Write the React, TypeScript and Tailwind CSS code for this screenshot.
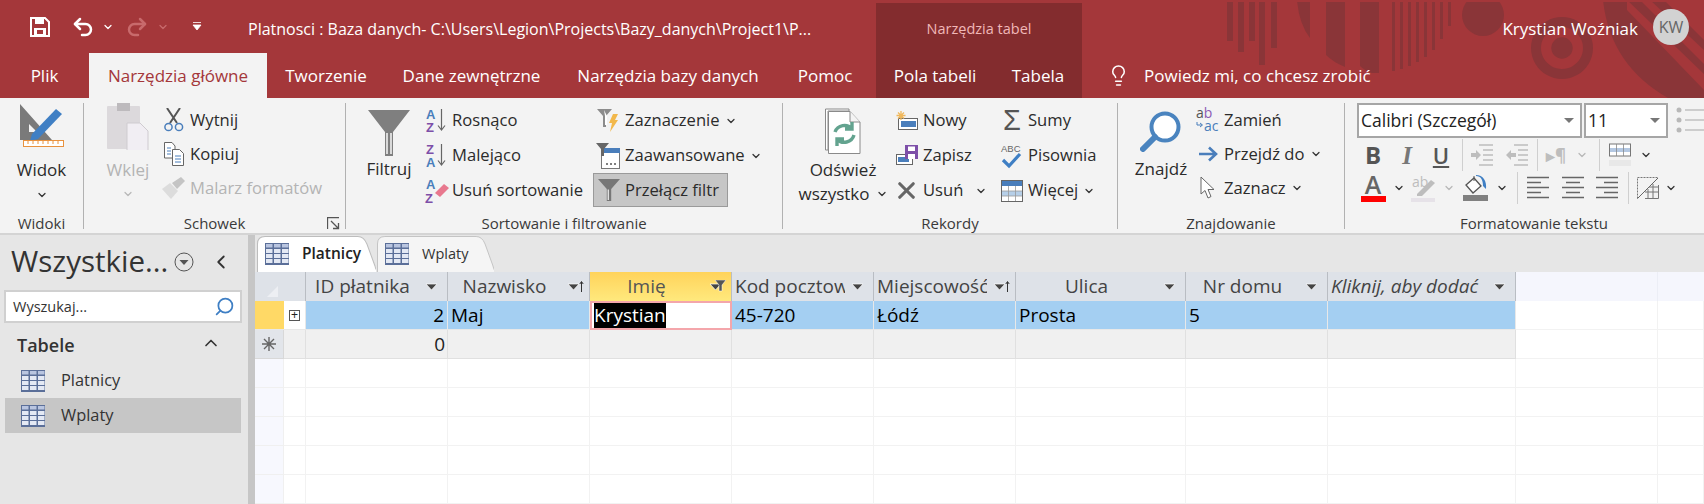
import { ChevronDown, ChevronLeft, ChevronUp, Lightbulb, Redo2, Search, Undo2, X } from 'lucide-react';
import type { ReactNode } from 'react';

const Caret = ({ dim = false, className = '' }: { dim?: boolean; className?: string }) => (
  <ChevronDown size={12} strokeWidth={2.5} className={`${dim ? 'text-[#b8b8b8]' : 'text-[#333]'} shrink-0 ${className}`} />
);

const TableIcon = ({ className = '' }: { className?: string }) => (
  <svg width="24" height="22" viewBox="0 0 24 22" className={className}>
    <rect width="24" height="22" fill="#5b6f99" />
    {[6, 11, 16].map((y) => [1, 9, 17].map((x) => <rect key={`${x}${y}`} x={x} y={y} width="6.5" height="4" fill="#e4e9f4" />))}
    {[1, 9, 17].map((x) => <rect key={x} x={x} y="1" width="6.5" height="3.5" fill="#b9c5e0" />)}
  </svg>
);

const Funnel = ({ size = 20, color = '#7f7f7f' }: { size?: number; color?: string }) => (
  <svg width={size} height={size} viewBox="0 0 20 20">
    <path d="M0 0H20L12 9V20H8V9Z" fill={color} />
    <path d="M9.3 9.5V19" stroke="#fff" strokeWidth="1" />
  </svg>
);

const SortAZ = ({ top, bottom, topC, bottomC }: { top: string; bottom: string; topC: string; bottomC: string }) => (
  <svg width="22" height="25" viewBox="0 0 22 25" className="overflow-visible">
    <text x="0" y="11" fontSize="13" fontWeight="700" fill={topC} fontFamily="Liberation Sans">{top}</text>
    <text x="0" y="24" fontSize="13" fontWeight="700" fill={bottomC} fontFamily="Liberation Sans">{bottom}</text>
    <path d="M15.5 1V21M12 17.5L15.5 22L19 17.5" stroke="#666" strokeWidth="1.2" fill="none" />
  </svg>
);

const icons: Record<string, ReactNode> = {
  cut: (
    <svg width="20" height="24" viewBox="0 0 20 24">
      <path d="M3 0L13 15M16 0L6 15" stroke="#555" strokeWidth="2" />
      <circle cx="4.5" cy="19" r="3.6" fill="none" stroke="#4a7ebb" strokeWidth="1.5" />
      <circle cx="15" cy="19" r="3.6" fill="none" stroke="#4a7ebb" strokeWidth="1.5" />
    </svg>
  ),
  copy: (
    <svg width="20" height="24" viewBox="0 0 20 24">
      <path d="M.5.5H8L11 4V16H.5Z" fill="#fff" stroke="#666" />
      <path d="M8.5 7.5H15.5L19.5 11.5V23.5H8.5Z" fill="#fff" stroke="#666" />
      <path d="M3 6H7M3 9H7M3 12H7" stroke="#4a7ebb" />
      <path d="M11 14H17M11 17H17M11 20H17" stroke="#4a7ebb" />
    </svg>
  ),
  brush: (
    <svg width="24" height="22" viewBox="0 0 24 22">
      <path d="M0 12L8 6L16 14L9 22Z" fill="#dcdcdc" />
      <path d="M10 6L19 0L23 4L15 12Z" fill="#c4c4c4" />
    </svg>
  ),
  asc: <SortAZ top="A" bottom="Z" topC="#4a7ebb" bottomC="#7d4fa8" />,
  desc: <SortAZ top="Z" bottom="A" topC="#7d4fa8" bottomC="#4a7ebb" />,
  clear: (
    <svg width="24" height="25" viewBox="0 0 24 25" className="overflow-visible">
      <text x="1" y="11" fontSize="13" fontWeight="700" fill="#4a7ebb" fontFamily="Liberation Sans">A</text>
      <text x="0" y="24.5" fontSize="13" fontWeight="700" fill="#7d4fa8" fontFamily="Liberation Sans">Z</text>
      <path d="M10 15L19 6L24 10L15 19Z" fill="#e8788e" />
    </svg>
  ),
  selection: (
    <svg width="22" height="24" viewBox="0 0 22 24">
      <path d="M0 0H15L9 7V18H6V7Z" fill="#8c8c8c" />
      <path d="M7 1L10 7V16H8V7Z" fill="#fff" />
      <path d="M16 5H21L18 11H21L13 23L15 14H12Z" fill="#f2b84b" />
    </svg>
  ),
  advanced: (
    <svg width="24" height="26" viewBox="0 0 24 26">
      <rect x="5.5" y="5.5" width="18" height="20" fill="#fff" stroke="#777" />
      <rect x="6" y="5" width="18" height="5" fill="#4a7ebb" />
      <path d="M0 0H13L8 6V13H5V6Z" fill="#666" />
      <path d="M10 21H12M14 21H16M18 21H20" stroke="#555" strokeWidth="1.4" />
    </svg>
  ),
  refresh: (
    <svg width="36" height="46" viewBox="0 0 36 46">
      <path d="M.5 1H24V3H3V42H.5Z" fill="#fff" stroke="#8a8a8a" />
      <path d="M3.5 3.5H25L35 14V45.5H3.5Z" fill="#fff" stroke="#8a8a8a" />
      <path d="M25 3.5V14H35" fill="#f4f4f4" stroke="#8a8a8a" />
      <path d="M10 24A10 10 0 0 1 27 21M27 14V21H20" fill="none" stroke="#63a38f" strokeWidth="3.4" />
      <path d="M29 27A10 10 0 0 1 12 31M12 38V31H19" fill="none" stroke="#63a38f" strokeWidth="3.4" />
    </svg>
  ),
  newRec: (
    <svg width="22" height="20" viewBox="0 0 22 20">
      <rect x="2.5" y="7.5" width="19" height="11" fill="#fff" stroke="#666" />
      <rect x="5" y="10" width="15" height="6" fill="#4a7ebb" />
      <path d="M5 0V9M.5 4.5H9.500M2 1.500L8 7.500M8 1.500L2 7.500" stroke="#f0b85c" strokeWidth="1.3" />
    </svg>
  ),
  saveRec: (
    <svg width="22" height="22" viewBox="0 0 22 22">
      <rect x=".5" y="9.500" width="16" height="10" fill="#fff" stroke="#666" />
      <rect x="2" y="12" width="11" height="5" fill="#4a7ebb" />
      <rect x="9" y="0" width="13" height="14" fill="#7d4fa8" />
      <rect x="12" y="1.500" width="7" height="4.500" fill="#fff" />
      <rect x="12" y="9" width="7" height="5" fill="#fff" />
    </svg>
  ),
  del: <X size={27} strokeWidth={2.8} className="text-[#666]" />,
  sum: <span className="text-[29px] leading-none text-[#555] font-['Liberation_Sans',sans-serif]">Σ</span>,
  spell: (
    <svg width="22" height="26" viewBox="0 0 22 26" className="overflow-visible">
      <text x="0" y="9" fontSize="9.500" fill="#666" fontFamily="Liberation Sans">ABC</text>
      <path d="M2 17L8 23L19 11" fill="none" stroke="#3f7fc4" strokeWidth="3.200" />
    </svg>
  ),
  more: (
    <svg width="22" height="22" viewBox="0 0 22 22">
      <rect x=".5" y=".5" width="21" height="21" fill="#fff" stroke="#666" />
      <rect x="1" y="1" width="20" height="5" fill="#4a7ebb" />
      <rect x="1" y="11" width="20" height="5" fill="#b6cfe8" />
      <path d="M1 11H21M1 16H21M7.500 6V21M14.500 6V21" stroke="#999" strokeWidth=".8" />
    </svg>
  ),
  replace: (
    <svg width="24" height="26" viewBox="0 0 24 26" className="overflow-visible">
      <text x="0" y="11" fontSize="14" fill="#555" fontFamily="Open Sans">a<tspan fill="#8a5bb5">b</tspan></text>
      <text x="8" y="24" fontSize="14" fill="#4a7ebb" fontFamily="Open Sans">ac</text>
      <path d="M1 15V18H6M4 16L6.500 18L4 20" fill="none" stroke="#4a7ebb" strokeWidth="1" />
    </svg>
  ),
  goto: (
    <svg width="20" height="16" viewBox="0 0 20 16">
      <path d="M1 8H17M11 1.500L18 8L11 14.500" fill="none" stroke="#4a7ebb" strokeWidth="2.600" />
    </svg>
  ),
  pointer: (
    <svg width="16" height="24" viewBox="0 0 16 24">
      <path d="M1 1V18L5 14.500L8 22L11 20.500L8 13.500H14Z" fill="#fff" stroke="#666" />
    </svg>
  ),
};

function Tool({ icon, label, iconW = 'w-[26px]', dim = false, caret }: { icon: string; label: string; iconW?: string; dim?: boolean; caret?: string }) {
  return (
    <div className={`flex items-center h-full whitespace-nowrap ${dim ? 'text-[#b4b4b4]' : 'text-[#2b2b2b]'}`}>
      <span className={`${iconW} flex justify-center shrink-0`}>{icons[icon]}</span>
      <span className="ml-[3px]">{label}</span>
      {caret && <Caret className={caret} />}
    </div>
  );
}

function Group({ width, label, children, launcher }: { width: string; label: string; children: ReactNode; launcher?: boolean }) {
  return (
    <div className={`${width} shrink-0 flex flex-col relative`}>
      <div className="h-[115px] flex pt-[5px] overflow-hidden">{children}</div>
      <div className="h-[20px] text-center text-[15px] leading-[20px] text-[#3a3a3a] whitespace-nowrap">{label}</div>
      {launcher && (
        <svg width="13" height="13" viewBox="0 0 13 13" className="absolute right-[5px] top-[119px]">
          <path d="M.5 12V.5H12M4 4L11 11M6 11.500H11.500V6" fill="none" stroke="#555" strokeWidth="1.300" />
        </svg>
      )}
    </div>
  );
}

const Sep = () => <div className="w-px h-[126px] mt-[5px] bg-[#b1b1b1] shrink-0" />;

const BigLabel = ({ children, dim = false }: { children: ReactNode; dim?: boolean }) => (
  <div className={`text-center text-[17px] leading-[24px] ${dim ? 'text-[#b4b4b4]' : 'text-[#2b2b2b]'}`}>{children}</div>
);

function Slot({ w, children }: { w: string; children?: ReactNode }) {
  return <div className={`${w} h-full flex items-center justify-center shrink-0`}>{children}</div>;
}

const VSep = () => <div className="w-px h-[32px] bg-[#cfcfcf] shrink-0" />;

const Lines = ({ align, color = '#666' }: { align: 'l' | 'c' | 'r'; color?: string }) => {
  const short = align === 'l' ? 'M0 6.500H14M0 16.500H14' : align === 'c' ? 'M4 6.500H18M4 16.500H18' : 'M8 6.500H22M8 16.500H22';
  return (
    <svg width="22" height="24" viewBox="0 0 22 24">
      <path d="M0 1.500H22M0 11.500H22M0 21.500H22" stroke={color} strokeWidth="1.400" />
      <path d={short} stroke={color} strokeWidth="1.400" />
    </svg>
  );
};

function FontGroup() {
  return (
    <div className="pl-[12px] flex flex-col w-full text-[17.5px]">
      <div className="flex gap-[2px] h-[35px]">
        <div className="w-[225px] h-[35px] border-2 border-[#a6a6a6] bg-white flex items-center pl-[2px] pr-[6px] justify-between shrink-0">
          <span className="text-[#222]">Calibri (Szczegół)</span>
          <span className="w-0 h-0 border-x-[5px] border-x-transparent border-t-[5px] border-t-[#777]" />
        </div>
        <div className="w-[84px] h-[35px] border-2 border-[#a6a6a6] bg-white flex items-center pl-[2px] pr-[6px] justify-between shrink-0">
          <span className="text-[#222]">11</span>
          <span className="w-0 h-0 border-x-[5px] border-x-transparent border-t-[5px] border-t-[#777]" />
        </div>
        <svg width="30" height="28" viewBox="0 0 30 28" className="mt-[3px] ml-[6px] shrink-0">
          {[4, 14, 24].map((y) => (
            <g key={y}>
              <circle cx="3" cy={y} r="2.500" fill="#b8b8b8" />
              <path d={`M9 ${y}H30`} stroke="#b8b8b8" strokeWidth="1.300" />
            </g>
          ))}
        </svg>
      </div>
      <div className="flex items-center h-[32px] mt-[1px] -ml-[1px]">
        <Slot w="w-[34px]"><span className="text-[24px] leading-none font-bold text-[#555]">B</span></Slot>
        <Slot w="w-[34px]"><span className="text-[25px] leading-none italic font-semibold text-[#777] font-['Liberation_Serif',serif]">I</span></Slot>
        <Slot w="w-[34px]"><span className="text-[22px] leading-none font-semibold text-[#555] underline underline-offset-2">U</span></Slot>
        <Slot w="w-[4px]" />
        <VSep />
        <Slot w="w-[37px]">
          <svg width="22" height="22" viewBox="0 0 22 22"><path d="M8 1H22M12 6H22M12 11H22M12 16H22M8 21H22" stroke="#bdbdbd" strokeWidth="1.300" /><path d="M0 9H5V6L10 11L5 16V13H0Z" fill="#bdbdbd" /></svg>
        </Slot>
        <Slot w="w-[34px]">
          <svg width="22" height="22" viewBox="0 0 22 22"><path d="M8 1H22M12 6H22M12 11H22M12 16H22M8 21H22" stroke="#bdbdbd" strokeWidth="1.300" /><path d="M10 9H5V6L0 11L5 16V13H10Z" fill="#bdbdbd" /></svg>
        </Slot>
        <Slot w="w-[3px]" />
        <VSep />
        <Slot w="w-[36px]"><span className="text-[17px] font-bold text-[#bdbdbd] leading-none">▸¶</span></Slot>
        <Slot w="w-[16px]"><Caret dim /></Slot>
        <Slot w="w-[9px]" />
        <VSep />
        <Slot w="w-[40px]">
          <svg width="22" height="24" viewBox="0 0 22 24"><rect x=".5" y="1" width="21" height="12" fill="#fff" stroke="#777" /><rect x="1" y="5" width="20" height="4" fill="#b4c8e2" /><path d="M7.500 1V13M14.500 1V13" stroke="#888" strokeWidth=".8" /><rect y="17" width="24" height="6" fill="#e8e8e8" /></svg>
        </Slot>
        <Slot w="w-[12px]"><Caret /></Slot>
      </div>
      <div className="flex items-center h-[32px] mt-[1px] -ml-[1px]">
        <Slot w="w-[34px]">
          <div className="flex flex-col items-center">
            <span className="text-[25px] leading-[21px] font-semibold text-[#666]">A</span>
            <span className="w-[25px] h-[6px] bg-[#ff0000] mt-[1px]" />
          </div>
        </Slot>
        <Slot w="w-[18px]"><Caret /></Slot>
        <Slot w="w-[30px]">
          <svg width="25" height="27" viewBox="0 0 25 27" className="overflow-visible"><text x="1" y="12" fontSize="14" fill="#bdbdbd" fontFamily="Open Sans">ab</text><path d="M6 19L20 5L24 8L11 21H6Z" fill="#bdbdbd" /><rect y="23" width="24" height="4" fill="#e6e2e8" /></svg>
        </Slot>
        <Slot w="w-[22px]"><Caret dim /></Slot>
        <Slot w="w-[31px]">
          <svg width="25" height="26" viewBox="0 0 25 26"><path d="M3 10L11 3L18 11L10 18Z" fill="#fff" stroke="#555" strokeWidth="1.300" /><path d="M11 6V1" stroke="#555" /><path d="M13 1C18 1 20 5 20 11L23 14C24 6 20 0 13 0Z" fill="#3f7fc4" /><rect y="20" width="25" height="6" fill="#808080" /></svg>
        </Slot>
        <Slot w="w-[21px]"><Caret /></Slot>
        <Slot w="w-[5px]" />
        <VSep />
        <Slot w="w-[39px]"><Lines align="l" /></Slot>
        <Slot w="w-[32px]"><Lines align="c" /></Slot>
        <Slot w="w-[36px]"><Lines align="r" /></Slot>
        <Slot w="w-[3px]" />
        <VSep />
        <Slot w="w-[38px]">
          <svg width="22" height="22" viewBox="0 0 22 22"><path d="M.5 21.500V.5H21" fill="none" stroke="#777" strokeDasharray="2 1" /><path d="M.5 21.500L21 1" stroke="#666" /><path d="M8 21.500H21.500V8M11 12V21M16 7V21M8 15H21M12 10H21" fill="none" stroke="#777" /></svg>
        </Slot>
        <Slot w="w-[8px]"><Caret /></Slot>
      </div>
    </div>
  );
}

function Ribbon() {
  return (
    <div className="h-[135px] bg-[#f3f3f3] flex text-[16.6px] border-b-[2px] border-[#d4d4d4] box-content overflow-hidden">
      <Group width="w-[83px]" label="Widoki">
        <div className="w-full flex flex-col items-center">
          <svg width="44" height="44" viewBox="0 0 44 44">
            <path d="M0 1L32 37H0ZM9 21V29H17Z" fill="#7a7a7a" fillRule="evenodd" />
            <path d="M12 31L36 6L42 11L18 36L10 38Z" fill="#3f7fc4" />
            <rect x="3.500" y="37.500" width="40" height="6" fill="#fff" stroke="#e8923f" />
            <path d="M8 38V41M13 38V41M18 38V41M23 38V41M28 38V41M33 38V41M38 38V41" stroke="#e8923f" />
          </svg>
          <div className="mt-[11px]"><BigLabel>Widok</BigLabel></div>
          <Caret className="mt-[7px]" />
        </div>
      </Group>
      <Sep />
      <Group width="w-[261px]" label="Schowek" launcher>
        <div className="w-[46px] ml-[21px] flex flex-col items-center shrink-0">
          <svg width="42" height="47" viewBox="0 0 42 47">
            <rect y="3" width="33" height="43" rx="1" fill="#dcd9dc" />
            <rect x="10" y="0" width="13" height="8" fill="#bdbabd" />
            <path d="M20 20H33L41 28V52H20Z" fill="#f1eef3" stroke="#cfcbd0" />
          </svg>
          <div className="mt-[8px]"><BigLabel dim>Wklej</BigLabel></div>
          <Caret dim className="mt-[6px]" />
        </div>
        <div className="ml-[10px] flex flex-col">
          <div className="h-[34px]"><Tool icon="cut" label="Wytnij" /></div>
          <div className="h-[34px]"><Tool icon="copy" label="Kopiuj" /></div>
          <div className="h-[34px]"><Tool icon="brush" label="Malarz formatów" dim /></div>
        </div>
      </Group>
      <Sep />
      <Group width="w-[436px]" label="Sortowanie i filtrowanie">
        <div className="w-[50px] ml-[18px] flex flex-col items-center shrink-0 pt-[7px]">
          <svg width="42" height="46" viewBox="0 0 42 46">
            <path d="M0 0H42L25 22V46H17V22Z" fill="#7f7f7f" />
            <path d="M19 23V44M23 23V44" stroke="#fff" strokeWidth="1.400" />
          </svg>
          <div className="mt-[1px]"><BigLabel>Filtruj</BigLabel></div>
        </div>
        <div className="w-[169px] ml-[10px] flex flex-col shrink-0">
          <div className="h-[35px]"><Tool icon="asc" label="Rosnąco" iconW="w-[25px]" /></div>
          <div className="h-[35px]"><Tool icon="desc" label="Malejąco" iconW="w-[25px]" /></div>
          <div className="h-[35px]"><Tool icon="clear" label="Usuń sortowanie" iconW="w-[25px]" /></div>
        </div>
        <div className="flex flex-col">
          <div className="h-[35px]"><Tool icon="selection" label="Zaznaczenie" iconW="w-[29px]" caret="ml-[5px]" /></div>
          <div className="h-[35px]"><Tool icon="advanced" label="Zaawansowane" iconW="w-[29px]" caret="ml-[5px]" /></div>
          <div className="h-[34px] w-[135px] bg-[#c6c6c6] border border-[#9a9a9a] flex items-center">
            <span className="w-[30px] flex justify-center shrink-0"><Funnel size={22} color="#777" /></span>
            <span className="ml-[1px] text-[#2b2b2b] whitespace-nowrap">Przełącz filtr</span>
          </div>
        </div>
      </Group>
      <Sep />
      <Group width="w-[334px]" label="Rekordy">
        <div className="w-[100px] ml-[10px] flex flex-col items-center shrink-0 pt-[5px]">
          <span className="h-[46px]">{icons.refresh}</span>
          <div className="mt-[4px] whitespace-nowrap"><BigLabel>Odśwież</BigLabel></div>
          <div className="flex items-center whitespace-nowrap"><BigLabel>wszystko</BigLabel><Caret className="ml-[6px]" /></div>
        </div>
        <div className="w-[106px] flex flex-col shrink-0">
          <div className="h-[35px]"><Tool icon="newRec" label="Nowy" iconW="w-[27px]" /></div>
          <div className="h-[35px]"><Tool icon="saveRec" label="Zapisz" iconW="w-[27px]" /></div>
          <div className="h-[35px]"><Tool icon="del" label="Usuń" iconW="w-[27px]" caret="ml-[12px]" /></div>
        </div>
        <div className="flex flex-col">
          <div className="h-[35px]"><Tool icon="sum" label="Sumy" /></div>
          <div className="h-[35px]"><Tool icon="spell" label="Pisownia" /></div>
          <div className="h-[35px]"><Tool icon="more" label="Więcej" caret="ml-[5px]" /></div>
        </div>
      </Group>
      <Sep />
      <Group width="w-[226px]" label="Znajdowanie">
        <div className="w-[54px] ml-[16px] flex flex-col items-center shrink-0 pt-[7px]">
          <svg width="42" height="42" viewBox="0 0 42 42">
            <circle cx="25" cy="17" r="13.500" fill="#fff" stroke="#4a84bf" strokeWidth="4" />
            <path d="M15 27L3 39" stroke="#4a84bf" strokeWidth="6" strokeLinecap="round" />
          </svg>
          <div className="mt-[5px]"><BigLabel>Znajdź</BigLabel></div>
        </div>
        <div className="ml-[7px] flex flex-col">
          <div className="h-[34px]"><Tool icon="replace" label="Zamień" /></div>
          <div className="h-[34px]"><Tool icon="goto" label="Przejdź do" caret="ml-[6px]" /></div>
          <div className="h-[34px]"><Tool icon="pointer" label="Zaznacz" caret="ml-[5px]" /></div>
        </div>
      </Group>
      <Sep />
      <Group width="w-[378px]" label="Formatowanie tekstu">
        <FontGroup />
      </Group>
    </div>
  );
}

function TitlePattern() {
  const thin: [number, number][] = [[1392, 71], [1400, 69], [1408, 66], [1416, 62], [1424, 57], [1432, 50], [1440, 39], [1448, 26]];
  const bars: [number, number][] = [[1227, 41], [1238, 52], [1249, 41], [1259, 65], [1271, 48]];
  return (
    <svg width="1704" height="98" viewBox="0 0 1704 98" className="absolute left-0 top-0">
      <defs>
        <clipPath id="band"><rect x="0" y="2" width="1704" height="96" /></clipPath>
      </defs>
      <g clipPath="url(#band)" fill="#8a3538">
        {bars.map(([x, y]) => <rect key={x} x={x} y="0" width="6" height={y} />)}
        <path d="M1297 0Q1299 24 1310 38V0Z" />
        <path d="M1326 0H1345V67Q1333 62 1326 55Z" />
        <path d="M1360 0H1379V73H1372Q1365 71 1360 66Z" />
        {thin.map(([x, y]) => <rect key={x} x={x} y="0" width="3" height={y} />)}
        <circle cx="1483" cy="15" r="21" />
        <path fillRule="evenodd" d="M1562 17a31 31 0 1 0 .01 0ZM1562 27a21 21 0 1 1-.01 0Z" />
        <circle cx="1562" cy="48" r="10.700" />
        <path d="M1603 0Q1610 65 1668 98H1704V90L1627 10V0Z" />
        <path d="M1627 0H1640L1704 64V74ZM1650 0H1664L1704 40V50Z" />
      </g>
    </svg>
  );
}

function Chrome() {
  const tab = 'flex items-center justify-center shrink-0 whitespace-nowrap';
  return (
    <div className="h-[98px] bg-[#a4373a] text-white relative flex text-[17px]">
      <TitlePattern />
      <div className="w-[876px] shrink-0 flex flex-col relative">
        <div className="h-[53px] flex items-center">
          <svg width="20" height="20" viewBox="0 0 20 20" className="ml-[30px]">
            <path d="M1 1H15L19 5V19H1Z" fill="none" stroke="#fff" strokeWidth="2" />
            <rect x="5" y="1" width="9" height="6" fill="#fff" />
            <path d="M4 19V11H16V19Z" fill="#fff" />
            <rect x="7" y="13" width="6" height="4" fill="#a4373a" />
          </svg>
          <Undo2 size={24} strokeWidth={2.5} className="ml-[21px]" />
          <Caret className="ml-[7px] !text-white" />
          <Redo2 size={24} strokeWidth={2.5} className="ml-[11px] text-[#c86a6c]" />
          <Caret className="ml-[8px] !text-[#c86a6c]" />
          <svg width="10" height="9" viewBox="0 0 10 9" className="ml-[23px]"><path d="M1 .5H9M1 3H9L5 8Z" stroke="#fff" fill="#fff" strokeWidth=".8" /></svg>
          <span className="ml-[46px] mt-[4px] whitespace-nowrap text-[16px]">Platnosci : Baza danych- C:\Users\Legion\Projects\Bazy_danych\Project1\P...</span>
        </div>
        <div className="h-[45px] flex">
          <div className={`${tab} w-[89px]`}>Plik</div>
          <div className={`${tab} w-[178px] bg-[#f3f3f3] text-[#a4373a]`}>Narzędzia główne</div>
          <div className={`${tab} w-[118px]`}>Tworzenie</div>
          <div className={`${tab} w-[173px]`}>Dane zewnętrzne</div>
          <div className={`${tab} w-[220px]`}>Narzędzia bazy danych</div>
          <div className={`${tab} w-[94px]`}>Pomoc</div>
        </div>
      </div>
      <div className="w-[206px] shrink-0 flex flex-col relative">
        <div className="h-[53px] pt-[3px]">
          <div className="h-[50px] bg-[#832c2e] flex justify-center pt-[15px] text-[#f0b8b8] text-[14.5px]">Narzędzia tabel</div>
        </div>
        <div className="h-[45px] flex bg-[#832c2e]">
          <div className={`${tab} w-[118px]`}>Pola tabeli</div>
          <div className={`${tab} w-[88px]`}>Tabela</div>
        </div>
      </div>
      <div className="flex-1 min-w-0 flex flex-col relative">
        <div className="h-[53px] flex items-center justify-end pr-[15px]">
          <span className="whitespace-nowrap mt-[4px]">Krystian Woźniak</span>
          <span className="w-[36px] h-[36px] ml-[15px] rounded-full bg-[#d2d2d2] text-[#666] flex items-center justify-center text-[16px]">KW</span>
        </div>
        <div className="h-[45px] flex items-center pl-[25px]">
          <Lightbulb size={23} strokeWidth={1.6} />
          <span className="ml-[14px] whitespace-nowrap">Powiedz mi, co chcesz zrobić</span>
        </div>
      </div>
    </div>
  );
}

function NavPane() {
  return (
    <div className="w-[248px] shrink-0 bg-[#e6e6e6] flex flex-col text-[#333]">
      <div className="h-[53px] flex items-center pl-[11px]">
        <span className="text-[29.5px] whitespace-nowrap text-[#333]">Wszystkie...</span>
        <svg width="20" height="20" viewBox="0 0 20 20" className="ml-[6px] shrink-0"><circle cx="10" cy="10" r="9" fill="none" stroke="#555" /><path d="M5.500 8H14.500L10 13Z" fill="#555" /></svg>
        <ChevronLeft size={22} className="ml-[16px] shrink-0" />
      </div>
      <div className="ml-[4px] mr-[6px] mt-[2px] h-[33px] bg-white border-2 border-[#d0d0d0] flex items-center justify-between pl-[7px] pr-[5px] text-[14.5px]">
        <span>Wyszukaj...</span>
        <Search size={21} className="text-[#3f7fc4] -scale-x-100" />
      </div>
      <div className="h-[40px] flex items-center justify-between pt-[5px] pl-[17px] pr-[27px] text-[18px] font-semibold">
        <span>Tabele</span>
        <ChevronUp size={20} className="-mt-[5px]" />
      </div>
      <div className="h-[35px] ml-[5px] mr-[7px] flex items-center pl-[16px] text-[16.4px]">
        <TableIcon className="shrink-0" />
        <span className="ml-[16px]">Platnicy</span>
      </div>
      <div className="h-[35px] ml-[5px] mr-[7px] bg-[#c6c6c6] flex items-center pl-[16px] text-[16.4px]">
        <TableIcon className="shrink-0" />
        <span className="ml-[16px]">Wplaty</span>
      </div>
    </div>
  );
}

function DocTab({ label, active, w }: { label: string; active?: boolean; w: string }) {
  return (
    <div className={`${w} relative h-[36px] shrink-0`}>
      <svg viewBox="0 0 118 36" preserveAspectRatio="none" className="absolute inset-0 w-full h-full">
        <path d="M.5 36V8Q.5 .5 8 .5H100Q106 .5 109 8L117 30Q118 36 122 36" fill={active ? '#fff' : '#f5f5f5'} stroke={active ? '#bdbdbd' : '#c4c4c4'} />
      </svg>
      <div className="relative h-full flex items-center pl-[8px]">
        <TableIcon />
        <span className={`ml-[13px] ${active ? 'text-[15.5px] font-semibold text-[#222]' : 'text-[14.5px] text-[#333]'}`}>{label}</span>
      </div>
    </div>
  );
}

const cols = 'grid grid-cols-[29px_22px_142px_142px_142px_142px_142px_170px_142px_188px_142px_1fr]';

const Arrow = ({ sort = false, filter = false }: { sort?: boolean; filter?: boolean }) => (
  <span className="w-[28px] h-full flex items-center justify-center shrink-0">
    <svg width="18" height="14" viewBox="0 0 18 14">
      <path d="M2 4H13L7.500 10Z" fill="#444" stroke="#fff" strokeWidth=".7" />
      {sort && !filter && <path d="M15.500 12V2M13.800 4L15.500 1.500L17.200 4" stroke="#333" fill="none" />}
      {filter && <path d="M7 0H18L14 5V11H11V5Z" fill="#555" stroke="#fff" strokeWidth=".5" />}
    </svg>
  </span>
);

const HeadCell = ({ label, italic, left, sort, filter }: { label: string; italic?: boolean; left?: boolean; sort?: boolean; filter?: boolean }) => (
  <div className={`h-[29px] flex items-center border-r border-[#b9bdc3] min-w-0 ${filter ? 'bg-gradient-to-b from-[#ffd35a] to-[#ffe97d] text-[#555]' : 'bg-[#dee2e8] text-[#444]'}`}>
    <span className={`flex-1 min-w-0 overflow-hidden whitespace-nowrap ${left ? 'pl-[3px]' : 'text-center'} ${italic ? 'italic text-[19px]' : ''}`}>{label}</span>
    <Arrow sort={sort} filter={filter} />
  </div>
);

function Datasheet() {
  const blank = Array.from({ length: 5 });
  const cell = 'h-[29px] border-r border-b border-[#f2f2f2]';
  const selected = 'h-[29px] px-[3px] pt-[1px] bg-[#a4cff2] border-r border-b border-[#e8e8e8] flex items-center text-black whitespace-nowrap text-[19px]';
  const fresh = 'h-[29px] bg-[#f0f0f0] border-r border-b border-[#e0e0e0] flex items-center justify-end px-[2px] pt-[1px] text-[#222] text-[19px]';
  return (
    <div className="flex-1 min-w-0 flex flex-col bg-white text-[19px]">
      <div className="h-[37px] bg-[#e6e6e6] pt-[1px] pl-[2px] flex gap-[1px]">
        <DocTab label="Platnicy" active w="w-[119px]" />
        <DocTab label="Wplaty" w="w-[117px]" />
      </div>
      <div className={cols}>
        <div className="col-span-2 h-[29px] bg-[#dee2e8] border-r border-[#b9bdc3] flex items-end pl-[12px] pb-[4px]">
          <svg width="11" height="11" viewBox="0 0 11 11"><path d="M11 0V11H0Z" fill="#edeff3" /></svg>
        </div>
        <HeadCell label="ID płatnika" />
        <HeadCell label="Nazwisko" sort />
        <HeadCell label="Imię" filter sort />
        <HeadCell label="Kod pocztowy" left />
        <HeadCell label="Miejscowość" left sort />
        <HeadCell label="Ulica" />
        <HeadCell label="Nr domu" />
        <HeadCell label="Kliknij, aby dodać" italic left />
        <div className="h-[29px] bg-[#f5f6fd] border-r border-[#eceef6]" />
        <div className="h-[29px] bg-[#f5f6fd]" />

        <div className="h-[29px] bg-[#ffd966] border-b border-[#e8e8e8]" />
        <div className="h-[29px] bg-white border-b border-r border-[#e8e8e8] flex items-center justify-center">
          <span className="w-[11px] h-[11px] border border-[#555] text-[#222] text-[12px] leading-[9px] flex items-center justify-center font-['Liberation_Sans',sans-serif]">+</span>
        </div>
        <div className={`${selected} justify-end`}>2</div>
        <div className={selected}>Maj</div>
        <div className="h-[29px] bg-white border-2 border-[#f4a6ab] pl-[2px] flex items-center text-[19px]">
          <span className="bg-black text-white h-[25px] leading-[25px] whitespace-nowrap">Krystian</span>
        </div>
        <div className={selected}>45-720</div>
        <div className={selected}>Łódź</div>
        <div className={selected}>Prosta</div>
        <div className={selected}>5</div>
        <div className={selected} />
        <div className={cell} />
        <div className={cell} />

        <div className="h-[29px] bg-[#e2e5ea] border-b border-r border-[#d8d8d8] flex items-center justify-center">
          <svg width="14" height="14" viewBox="0 0 14 14"><path d="M7 0V14M0 7H14M2 2L12 12M12 2L2 12" stroke="#666" strokeWidth="1.400" /></svg>
        </div>
        <div className={fresh} />
        <div className={fresh}>0</div>
        {Array.from({ length: 7 }).map((_, i) => <div key={i} className={fresh} />)}
        <div className={cell} />
        <div className={cell} />

        {blank.flatMap((_, r) =>
          Array.from({ length: 12 }).map((_, c) => (
            <div key={`${r}-${c}`} className={c === 0 ? 'h-[29px] bg-[#f7f8fe] border-r border-b border-[#f0f0f0]' : cell} />
          ))
        )}
      </div>
    </div>
  );
}

export default function App() {
  return (
    <div className="h-[504px] w-[1704px] overflow-hidden flex flex-col font-['Open_Sans','Noto_Sans',sans-serif] bg-white">
      <Chrome />
      <Ribbon />
      <div className="flex-1 min-h-0 flex overflow-hidden">
        <NavPane />
        <div className="w-[7px] shrink-0 bg-[#c6c6c6]" />
        <Datasheet />
      </div>
    </div>
  );
}
